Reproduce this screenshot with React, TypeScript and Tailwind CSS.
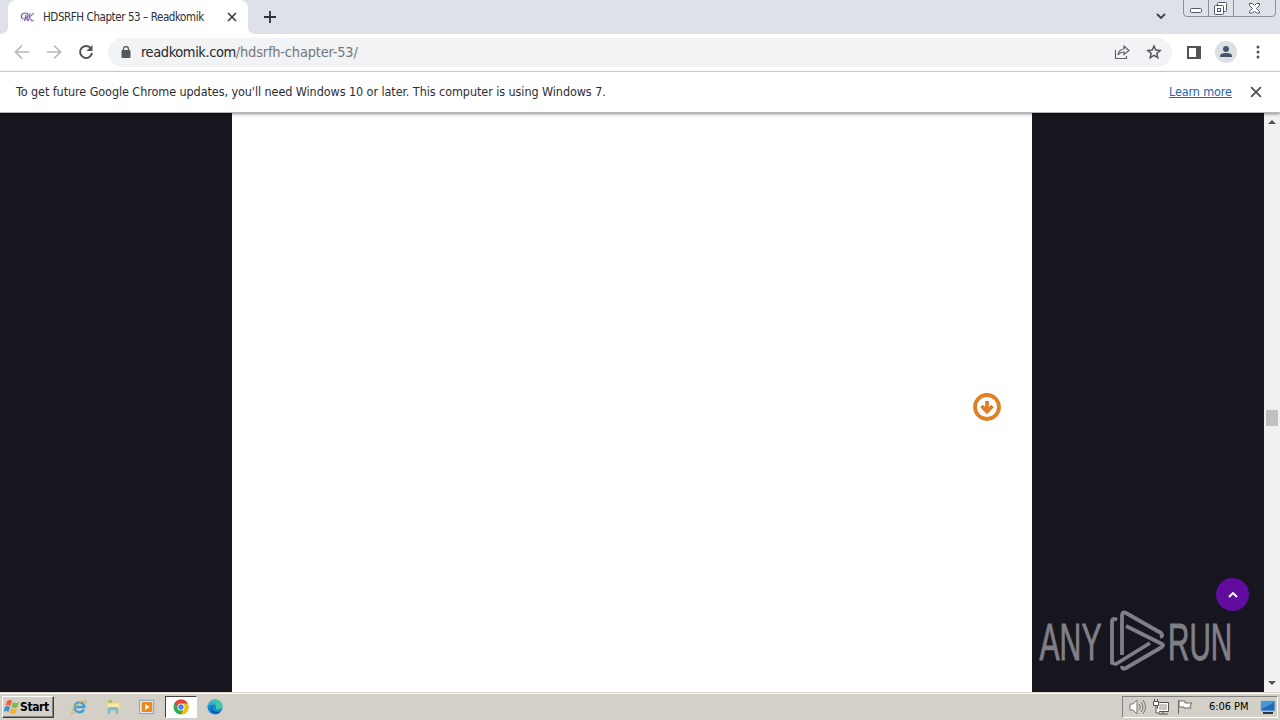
import type { ReactNode } from "react";

const UI_FONT = "font-['DejaVu_Sans_Condensed','DejaVu_Sans',sans-serif] [font-stretch:condensed]";

function WindowControls() {
  return (
    <svg className="absolute right-[4px] top-0 h-[17px] w-[93px]" viewBox="0 0 93 17" fill="none">
      <path d="M.5 0v13q0 3.500 3.500 3.500h85q3.500 0 3.500-3.500V0M25.500 0v16M50.500 0v16" stroke="#8c9097" />
      <rect x="7.500" y="8.500" width="11" height="4" rx="1" fill="#fff" stroke="#535666" />
      <rect x="34.500" y="2.500" width="9" height="9" rx="1" fill="#fff" stroke="#535666" />
      <rect x="31.500" y="5.500" width="9" height="9" rx="1" fill="#fff" stroke="#535666" />
      <rect x="34.500" y="8.500" width="3" height="3" stroke="#535666" />
      <path d="M66.500 3.500h3l2 2 2-2h3v2l-3 3 3 3v1.500h-3l-2-2-2 2h-3v-1.500l3-3-3-3z" fill="#fff" stroke="#535666" />
    </svg>
  );
}

function TabStrip() {
  return (
    <div className="relative flex h-[34px] bg-[#dee1e8]">
      <div className="relative ml-2 flex h-full w-60 items-center rounded-t-lg bg-white">
        <svg className="absolute -left-2 bottom-0 size-2" viewBox="0 0 8 8">
          <path d="M8 0v8H0q8 0 8-8" fill="#fff" />
        </svg>
        <svg className="absolute -right-2 bottom-0 size-2" viewBox="0 0 8 8">
          <path d="M0 0v8h8Q0 8 0 0" fill="#fff" />
        </svg>
        <svg className="ml-3 h-[14px] w-[15px] shrink-0" viewBox="0 0 15 14" fill="none" strokeWidth="1.200">
          <path d="M3.500 9C0 8 1 3 5 3c4 0 4 4 1 5M6 5 4.500 11M6 8l2.500 3" stroke="#7359a6" />
          <path d="M10 3 8.500 11M14 3 9 7.500l3 3.500 2-1" stroke="#9a76bd" />
        </svg>
        <span className="ml-2 mt-[2px] w-[170px] whitespace-nowrap text-[11.500px] tracking-[-0.420px] text-[#2c2e33]">
          HDSRFH Chapter 53 – Readkomik
        </span>
        <svg className="absolute left-[219px] top-[12px] size-[10px]" viewBox="0 0 10 10">
          <path d="m1 1 8 8M9 1 1 9" stroke="#3c4043" strokeWidth="1.700" />
        </svg>
      </div>
      <svg className="ml-[16px] mt-[11px] size-3" viewBox="0 0 12 12">
        <path d="M6 0v12M0 6h12" stroke="#303236" strokeWidth="1.800" />
      </svg>
      <svg className="absolute left-[1156px] top-[13px] h-[7px] w-[10px]" viewBox="0 0 10 7">
        <path d="m1 1 4 4 4-4" fill="none" stroke="#3c4043" strokeWidth="1.800" />
      </svg>
      <WindowControls />
    </div>
  );
}

function Toolbar() {
  return (
    <div className="flex h-[38px] items-center border-b border-[#d9dbde] bg-white pl-[14px] pr-[14px]">
      <svg className="-mt-[2px] size-4" viewBox="0 0 16 16" fill="none" stroke="#b5b7ba" strokeWidth="1.700">
        <path d="M15 8H2M8 1.500 1.500 8 8 14.500" />
      </svg>
      <svg className="-mt-[2px] ml-4 size-4" viewBox="0 0 16 16" fill="none" stroke="#b5b7ba" strokeWidth="1.700">
        <path d="M1 8h13M8 1.500 14.500 8 8 14.500" />
      </svg>
      <svg className="-mt-[2px] ml-4 size-4" viewBox="0 0 16 16">
        <path d="M13 4.500A6 6 0 1 0 14 9" fill="none" stroke="#505357" strokeWidth="2" />
        <path d="M14.500 1v6h-6z" fill="#505357" />
      </svg>
      <div className="ml-[14px] flex h-[29px] w-[1064px] items-center rounded-full bg-[#f1f3f5] pl-[13px]">
        <svg className="-mt-[2px] h-3 w-[10px]" viewBox="0 0 10 12">
          <rect x=".5" y="4" width="9" height="8" rx="1" fill="#54575b" />
          <path d="M2.500 5V3a2.500 2.500 0 0 1 5 0v2" fill="none" stroke="#54575b" strokeWidth="1.300" />
        </svg>
        <span className="ml-[10px] mt-px whitespace-nowrap text-[14.500px] text-[#25272b]">
          <span className="tracking-[-0.420px]">readkomik.com</span>
          <span className="tracking-[-0.200px] text-[#74777b]">/hdsrfh-chapter-53/</span>
        </span>
        <svg className="-mt-[2px] ml-auto h-4 w-[16px]" viewBox="0 0 16 16" fill="none" stroke="#5f6368" strokeWidth="1.200">
          <path d="M1.500 6v8.500h11V12" />
          <path d="M4 11q1-6 6-6V2l5 4.500-5 4V8q-4 0-6 3z" />
        </svg>
        <svg className="-mt-[2px] ml-4 mr-[10px] size-4" viewBox="0 0 24 24" fill="none" stroke="#54575b" strokeWidth="2.300">
          <path d="m12 3 2.700 6 6.500.700-4.900 4.300 1.400 6.500-5.700-3.400-5.700 3.400 1.400-6.500L2.800 9.700l6.500-.7z" />
        </svg>
      </div>
      <svg className="-mt-px ml-[15px] h-[13px] w-[14px]" viewBox="0 0 14 13">
        <rect x="1" y="1" width="12" height="11" fill="none" stroke="#505357" strokeWidth="2" />
        <path d="M9 0h5v13H9z" fill="#505357" />
      </svg>
      <svg className="-mt-[2px] ml-[14px] size-[22px]" viewBox="0 0 22 22">
        <circle cx="11" cy="11" r="11" fill="#dde0e5" />
        <circle cx="11" cy="8" r="3" fill="#46536b" />
        <path d="M5 16v-1q0-3 6-3t6 3v1z" fill="#46536b" />
      </svg>
      <svg className="-mt-px ml-[19px] h-[14px] w-[4px]" viewBox="0 0 4 14" fill="#505357">
        <circle cx="2" cy="2" r="1.500" />
        <circle cx="2" cy="7" r="1.500" />
        <circle cx="2" cy="12" r="1.500" />
      </svg>
    </div>
  );
}

function InfoBar() {
  return (
    <div className="relative z-10 flex h-[41px] items-center border-b border-[#b5b7b9] bg-white pl-4 shadow-[0_1px_3px_rgba(0,0,0,0.450)]">
      <span className="whitespace-nowrap text-[12.500px] tracking-[-0.075px] text-[#2c2e33]">
        To get future Google Chrome updates, you'll need Windows 10 or later. This computer is using Windows 7.
      </span>
      <a className="absolute left-[1169px] whitespace-nowrap text-[12.500px] tracking-[-0.120px] text-[#2267b5] underline">
        Learn more
      </a>
      <svg className="absolute left-[1250px] top-[14px] size-[12px]" viewBox="0 0 11 11">
        <path d="m1 1 9 9M10 1l-9 9" stroke="#54575b" strokeWidth="1.800" />
      </svg>
    </div>
  );
}

function Watermark() {
  return (
    <svg className="absolute left-[1036px] top-[494px] h-[72px] w-[212px]" viewBox="0 0 212 72" fill="none">
      <g fill="#807f87" stroke="#807f87" strokeWidth="1" fontFamily="Liberation Sans" fontSize="52">
        <text transform="translate(3.500 52.500) scale(.58 1)">ANY</text>
        <text transform="translate(132 52.500) scale(.57 1)">RUN</text>
      </g>
      <g stroke="#807f87" strokeWidth="3.800" strokeLinejoin="round">
        <path d="M81 13q-5-3-5 2v41l4 1 34-21" />
        <path d="M86 48V9q0-5 4-3l35 20q3 3-1 4" />
        <path d="m90 19 36 18q2 1 0 3L90 61q-4 2-4-2" />
      </g>
    </svg>
  );
}

function Page() {
  return (
    <div className="relative flex h-[579px] bg-[#17151d]">
      <div className="ml-[232px] w-[800px] bg-white" />
      <svg className="absolute left-[973px] top-[280px] size-7" viewBox="0 0 28 28">
        <circle cx="14" cy="14" r="12" fill="#fff" stroke="#e07f24" strokeWidth="3.800" />
        <path d="M14 8v10M8.500 13 14 18.500l5.500-5.500" fill="none" stroke="#e07f24" strokeWidth="3.800" />
      </svg>
      <div className="absolute left-[1216px] top-[465px] flex size-[33px] items-center justify-center rounded-full bg-[#610c9f]">
        <svg className="h-[6px] w-[10px]" viewBox="0 0 10 6">
          <path d="m1 5 4-4 4 4" fill="none" stroke="#fff" strokeWidth="1.900" />
        </svg>
      </div>
      <Watermark />
      <div className="ml-auto flex w-4 flex-col items-center bg-[#f1f1f1]">
        <svg className="mt-[7px] h-[4px] w-2" viewBox="0 0 8 4">
          <path d="m0 4 4-4 4 4z" fill="#505050" />
        </svg>
        <div className="mt-[286px] h-[16px] w-[12px] bg-[#c1c1c1]" />
        <svg className="mb-[7px] mt-auto h-[4px] w-2" viewBox="0 0 8 4">
          <path d="m0 0 4 4 4-4z" fill="#505050" />
        </svg>
      </div>
    </div>
  );
}

function TaskIcon({ children, className }: { children: ReactNode; className: string }) {
  return (
    <div className={`flex h-[22px] items-center justify-center ${className}`}>
      <svg className="size-4" viewBox="0 0 18 18" fill="none">
        {children}
      </svg>
    </div>
  );
}

function Taskbar() {
  return (
    <div className="relative flex h-7 items-start border-t border-[#d4d0c8] bg-[#d4d0c8] pt-[3px] shadow-[inset_0_1px_0_#fff]">
      <div className="ml-[2px] flex h-[22px] w-[52px] items-center border border-b-[#404040] border-l-white border-r-[#404040] border-t-white pl-[1px] shadow-[inset_-1px_-1px_0_#808080]">
        <svg className="h-4 w-[15px] shrink-0" viewBox="0 0 15 16">
          <path d="M3 2q3-2 5 0L6.500 7Q4 5 1.500 7z" fill="#ed6438" />
          <path d="M9 3q3 2 6 0l-1.500 5q-3 2-6 0z" fill="#85b94b" />
          <path d="M1 8q3-2 5 0l-1.500 5Q2 11-.5 13z" fill="#408fd3" />
          <path d="M7 9q3 2 6 0l-1.500 5q-3 2-6 0z" fill="#f0b52d" />
        </svg>
        <span className="ml-[1px] text-[12px] font-bold tracking-[-0.400px] text-black">Start</span>
      </div>
      <TaskIcon className="ml-[16px] w-[18px]">
        <path d="M14.500 12q-2 3-5 3a5.500 5.500 0 1 1 5.500-6H5" stroke="#3b9fda" strokeWidth="2.800" />
        <path d="M4 15Q0 18 1 14 4 6 12 3q7-3 4 2" stroke="#e4b63e" strokeWidth="1.300" />
      </TaskIcon>
      <TaskIcon className="ml-[16px] w-[18px]">
        <path d="M2 2h6l1 2h8v11H2z" fill="#ecd276" />
        <path d="M4 1h4v3H4z" fill="#8cc477" />
        <path d="M3 5h13v5H3z" fill="#f8e9a7" />
        <path d="M3 17v-6q0-2 2-2h8q2 0 2 2v6h-3v-4H6v4z" fill="#7dbce0" />
      </TaskIcon>
      <TaskIcon className="ml-[16px] w-[18px]">
        <path d="M.5 1.500h16v15H.5z" fill="#d8ecf5" stroke="#6aa0bd" />
        <rect x="3" y="3.500" width="12" height="11" rx="1.500" fill="#ef891d" />
        <path d="m7 5.500 5 3.500-5 3.500z" fill="#fff" />
      </TaskIcon>
      <TaskIcon className="ml-[9px] w-[32px] border border-b-white border-l-[#404040] border-r-white border-t-[#404040] bg-white">
        <circle cx="9" cy="9" r="8.500" fill="#34a853" />
        <path d="M1.500 5a8.500 8.500 0 0 1 15 0H9L6 11z" fill="#ea4335" />
        <path d="M9 5h7.500A8.500 8.500 0 0 1 9 17.500l3-6.500z" fill="#fbbc04" />
        <circle cx="9" cy="9" r="4" fill="#fff" />
        <circle cx="9" cy="9" r="3" fill="#4285f4" />
      </TaskIcon>
      <TaskIcon className="ml-[9px] w-[18px]">
        <circle cx="9" cy="9" r="8.500" fill="#1689cf" />
        <path d="M.5 8C3-1.500 17.500-1.500 17.500 8q0 3-4.500 4-4 0-3-2 1-5-4-4Q3 6 .5 8" fill="#45c5a7" />
        <path d="M1 8q1-4 5-5 5 0 6 3-2-2-5 0-3 0-6 2" fill="#30aee0" />
        <path d="M6 7q-3 9 9 7-4 5-9 1Q2 12 6 7" fill="#075caa" />
      </TaskIcon>
      <div className="absolute left-[1122px] top-[3px] flex h-[22px] w-[156px] items-center border border-b-white border-l-[#808080] border-r-white border-t-[#808080]">
        <svg className="ml-[6px] h-4 w-[18px]" viewBox="0 0 18 16" fill="none" stroke="#77746f">
          <path d="M1 5h3l4-4v14l-4-4H1z" fill="#fff" />
          <path d="M10 5q3 3 0 6M12 3q4 5 0 10M14 1q5 7 0 14" />
        </svg>
        <svg className="ml-[6px] h-[16px] w-4" viewBox="0 0 16 16" fill="none" stroke="#56534f">
          <path d="M4.500 3.500h11v9h-11zM6 15h9M10 13v2" fill="#fff" />
          <path d="M6.500 5.500h7v5h-7z" fill="#c9c5bd" stroke="#c9c5bd" />
          <path d="M.5 2.500h5v4h-5zM1.500 0v2M4.500 0v2M3 7v7h4" fill="#fff" />
        </svg>
        <svg className="ml-[8px] h-4 w-4" viewBox="0 0 16 16" stroke="#6b6864">
          <path d="M1.500 1v14M2 2h6v2h7l-2 3 1 2H7V8H2z" fill="#fff" />
        </svg>
        <span className="ml-[16px] mt-px whitespace-nowrap text-[11px] tracking-[-0.050px] text-black">6:06 PM</span>
        <svg className="absolute right-[1px] top-[3px] h-[15px] w-4" viewBox="0 0 16 15">
          <path d="M1 1h14v10H1z" fill="#2469b3" stroke="#8cb8db" />
          <path d="M2 2h12L2 9z" fill="#4c95d4" />
          <path d="M3 12h10v2H3z" fill="#293542" />
        </svg>
      </div>
    </div>
  );
}

export default function App() {
  return (
    <div className={`h-[720px] w-[1280px] overflow-hidden bg-white ${UI_FONT}`}>
      <TabStrip />
      <Toolbar />
      <InfoBar />
      <Page />
      <Taskbar />
    </div>
  );
}
